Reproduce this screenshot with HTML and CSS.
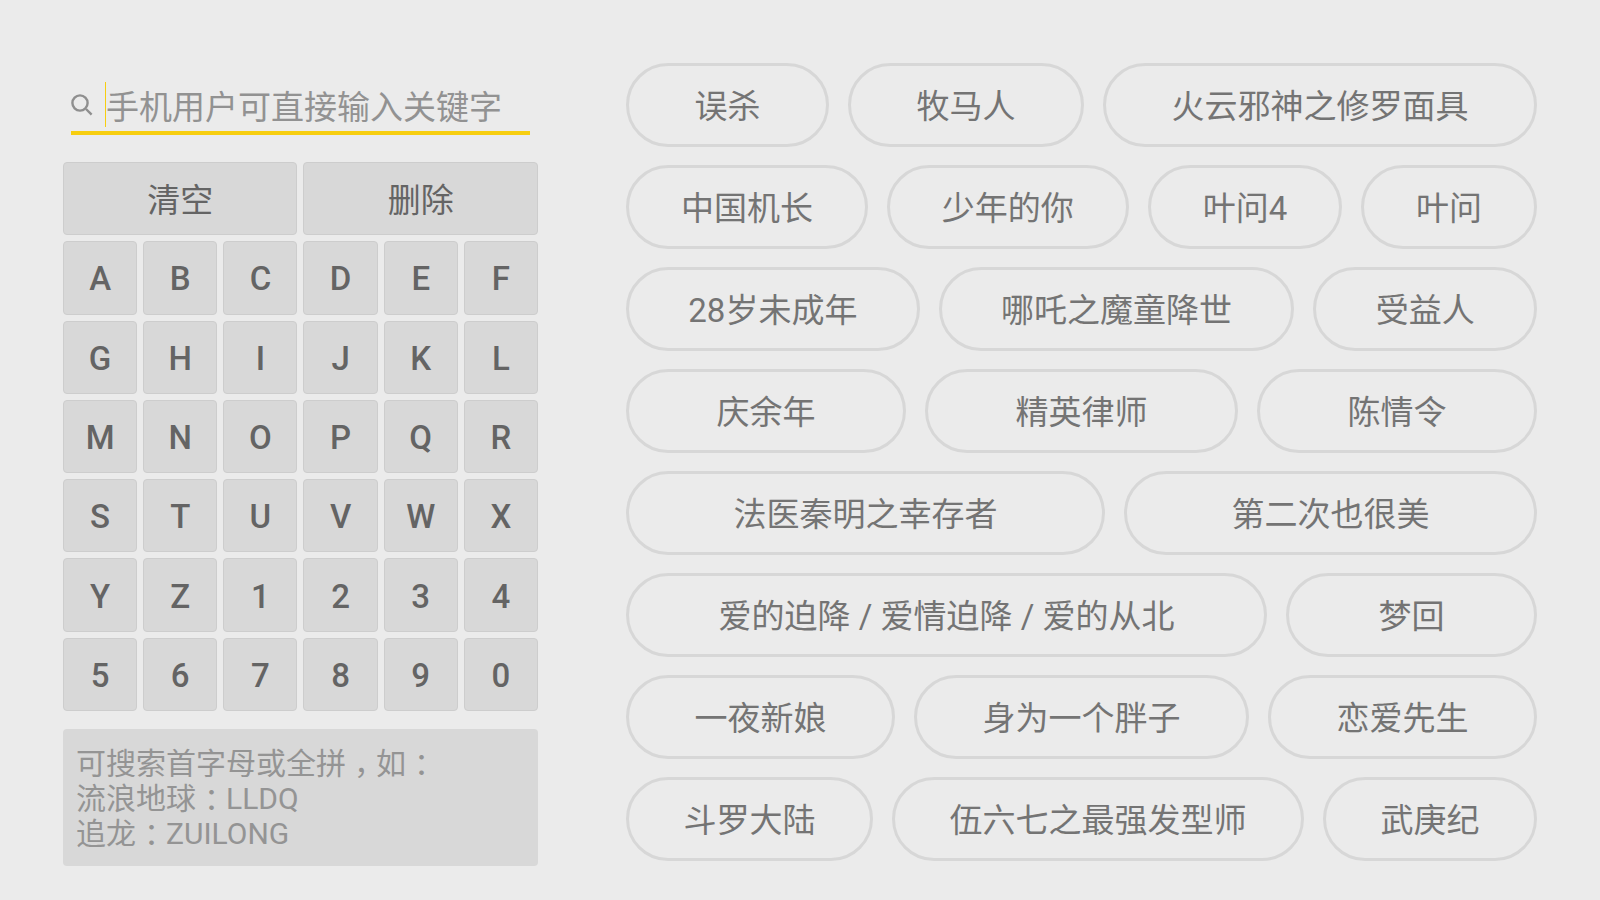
FILE: index.html
```html
<!DOCTYPE html>
<html lang="zh-CN">

<head>
    <meta charset="UTF-8">
    <meta name="viewport" content="width=device-width, initial-scale=1.0">
    <title>搜索</title>
    <link rel="stylesheet" href="styles.css">
</head>

<body>

    <main>
        <section class="search-panel">
            <form class="search-box" id="searchForm">
                <label for="keyword" aria-label="搜索">
                    <svg class="search-icon" viewBox="0 0 22 22" aria-hidden="true">
                        <circle cx="9" cy="9" r="7.6" />
                        <path d="M15 15L20.6 20.6" />
                    </svg>
                </label>
                <input type="text" id="keyword" name="keyword" placeholder="手机用户可直接输入关键字" autocomplete="off">
            </form>

            <div class="keyboard" id="keyboard">
                <button type="button" class="key wide" data-action="clear">清空</button>
                <button type="button" class="key wide" data-action="delete">删除</button>
                <button type="button" class="key">A</button>
                <button type="button" class="key">B</button>
                <button type="button" class="key">C</button>
                <button type="button" class="key">D</button>
                <button type="button" class="key">E</button>
                <button type="button" class="key">F</button>
                <button type="button" class="key">G</button>
                <button type="button" class="key">H</button>
                <button type="button" class="key">I</button>
                <button type="button" class="key">J</button>
                <button type="button" class="key">K</button>
                <button type="button" class="key">L</button>
                <button type="button" class="key">M</button>
                <button type="button" class="key">N</button>
                <button type="button" class="key">O</button>
                <button type="button" class="key">P</button>
                <button type="button" class="key">Q</button>
                <button type="button" class="key">R</button>
                <button type="button" class="key">S</button>
                <button type="button" class="key">T</button>
                <button type="button" class="key">U</button>
                <button type="button" class="key">V</button>
                <button type="button" class="key">W</button>
                <button type="button" class="key">X</button>
                <button type="button" class="key">Y</button>
                <button type="button" class="key">Z</button>
                <button type="button" class="key">1</button>
                <button type="button" class="key">2</button>
                <button type="button" class="key">3</button>
                <button type="button" class="key">4</button>
                <button type="button" class="key">5</button>
                <button type="button" class="key">6</button>
                <button type="button" class="key">7</button>
                <button type="button" class="key">8</button>
                <button type="button" class="key">9</button>
                <button type="button" class="key">0</button>
            </div>

            <div class="hint">
                <p>可搜索首字母或全拼<span class="punct">，</span>如<span class="punct">：</span></p>
                <p>流浪地球<span class="punct">：</span>LLDQ</p>
                <p>追龙<span class="punct">：</span>ZUILONG</p>
            </div>
        </section>

        <section class="hot-list">
            <div class="hot-row">
                <a href="#">误杀</a>
                <a href="#">牧马人</a>
                <a href="#">火云邪神之修罗面具</a>
            </div>
            <div class="hot-row">
                <a href="#">中国机长</a>
                <a href="#">少年的你</a>
                <a href="#">叶问4</a>
                <a href="#">叶问</a>
            </div>
            <div class="hot-row">
                <a href="#">28岁未成年</a>
                <a href="#">哪吒之魔童降世</a>
                <a href="#">受益人</a>
            </div>
            <div class="hot-row">
                <a href="#">庆余年</a>
                <a href="#">精英律师</a>
                <a href="#">陈情令</a>
            </div>
            <div class="hot-row">
                <a href="#">法医秦明之幸存者</a>
                <a href="#">第二次也很美</a>
            </div>
            <div class="hot-row">
                <a href="#">爱的迫降 / 爱情迫降 / 爱的从北</a>
                <a href="#">梦回</a>
            </div>
            <div class="hot-row">
                <a href="#">一夜新娘</a>
                <a href="#">身为一个胖子</a>
                <a href="#">恋爱先生</a>
            </div>
            <div class="hot-row">
                <a href="#">斗罗大陆</a>
                <a href="#">伍六七之最强发型师</a>
                <a href="#">武庚纪</a>
            </div>
        </section>
    </main>

    <script>
        const keyword = document.getElementById('keyword');

        document.getElementById('searchForm').addEventListener('submit', function (e) {
            e.preventDefault();
        });

        document.getElementById('keyboard').addEventListener('click', function (e) {
            const key = e.target.closest('.key');
            if (!key) return;

            if (key.dataset.action === 'clear') {
                keyword.value = '';
            } else if (key.dataset.action === 'delete') {
                keyword.value = keyword.value.slice(0, -1);
            } else {
                keyword.value += key.textContent;
            }
        });
    </script>
</body>

</html>
```
FILE: styles.css
```css
* {
    box-sizing: border-box;
}

body {
    margin: 0;
    background-color: #ebebeb;
    color: #747474;
    font-family: Roboto, "Noto Sans CJK SC", sans-serif;
    font-size: 33px;
}

main {
    display: grid;
    grid-template-columns: minmax(0, 475fr) minmax(0, 911fr);
    gap: 88px;
    align-items: start;
    padding: 63px 63px 32px;
}

/* search box */
.search-box {
    display: flex;
    align-items: center;
    margin: 19px 8px 27px;
    padding-bottom: 4px;
    border-bottom: 4px solid #f7ce10;
}

.search-box label {
    flex: none;
    width: 34px;
}

.search-icon {
    display: block;
    width: 22px;
    height: 22px;
    fill: none;
    stroke: #8f8f8f;
    stroke-width: 2.4;
}

.search-box input {
    flex: 1;
    min-width: 0;
    height: 45px;
    padding: 5px 0 0;
    border: none;
    border-left: 1px solid #f7ce10;
    outline: none;
    background: none;
    color: #666;
    font: inherit;
}

.search-box input::placeholder {
    color: #929292;
    opacity: 1;
}

/* keyboard */
.keyboard {
    display: grid;
    grid-template-columns: repeat(6, 1fr);
    grid-auto-rows: 1fr;
    gap: 6px;
    min-height: 549px;
}

.key {
    min-width: 0;
    padding: 2px 0 0;
    border: 1px solid #cdcdcd;
    border-radius: 4px;
    background-color: #d8d8d8;
    color: #646464;
    font: inherit;
    font-weight: 500;
    cursor: pointer;
}

.key.wide {
    grid-column: span 3;
    padding: 0 0 2px;
    font-weight: 400;
}

.key:hover {
    background-color: #cecece;
}

/* hint */
.hint {
    margin-top: 18px;
    padding: 17px 13px 15px;
    border-radius: 4px;
    background-color: #d8d8d8;
    color: #949494;
    font-size: 30px;
    line-height: 35px;
}

.hint p {
    height: 35px;
    margin: 0;
}

/* full-width punctuation sits in the middle of its cell */
.punct {
    display: inline-block;
    width: 30px;
    text-indent: 8px;
    white-space: nowrap;
}

/* hot keywords */
.hot-list {
    display: flex;
    flex-direction: column;
    gap: 18px;
}

.hot-row {
    display: flex;
    gap: 19px;
}

.hot-row a {
    flex: 1 1 auto;
    padding: 17px 0 13px;
    border: 3px solid #d7d7d7;
    border-radius: 42px;
    color: inherit;
    line-height: 48px;
    text-align: center;
    text-decoration: none;
    white-space: nowrap;
}

.hot-row a:hover {
    background-color: #d8d8d8;
}
```
